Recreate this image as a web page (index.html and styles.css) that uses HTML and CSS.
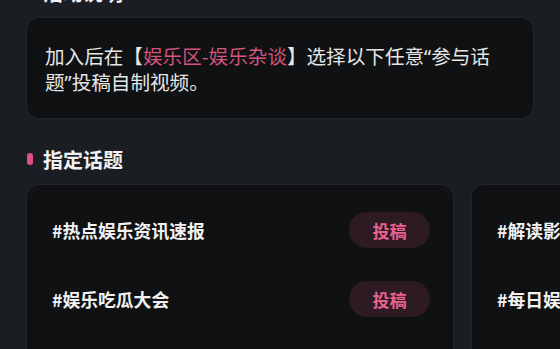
FILE: index.html
```html
<!DOCTYPE html>
<html lang="zh-CN">
<head>
<meta charset="utf-8">
<title>活动</title>
<link rel="stylesheet" href="styles.css">
</head>
<body>
<div class="page">
  <div class="section-title first"><span class="dot"></span><span>活动说明</span></div>
  <div class="info-card">
    <p class="info-text">加入后在【<span class="hl">娱乐区-娱乐杂谈</span>】选择以下任意<span class="q">“</span>参与话题<span class="q">”</span>投稿自制视频。</p>
  </div>

  <div class="section-title second"><span class="dot"></span><span>指定话题</span></div>
  <div class="topic-strip">
    <div class="topic-card">
      <div class="topic-row"><span class="topic-name">#热点娱乐资讯速报</span><span class="btn">投稿</span></div>
      <div class="topic-row"><span class="topic-name">#娱乐吃瓜大会</span><span class="btn">投稿</span></div>
    </div>
    <div class="topic-card">
      <div class="topic-row"><span class="topic-name">#解读影视热点</span><span class="btn">投稿</span></div>
      <div class="topic-row"><span class="topic-name">#每日娱乐新闻</span><span class="btn">投稿</span></div>
    </div>
  </div>
</div>
</body>
</html>
```

FILE: styles.css
```css
html, body {
  margin: 0;
  padding: 0;
  background: #1a1e23;
  overflow: hidden;
  height: 100%;
}

body {
  font-family: "Noto Sans CJK SC", "Noto Sans", sans-serif;
  color: #ececec;
}

.page {
  margin-top: -21px;
  padding: 0 27px;
}

.section-title {
  display: flex;
  align-items: center;
  gap: 10px;
  height: 26px;
  font-size: 20px;
  font-weight: 700;
  color: #f2f2f2;
}

.section-title.first {
  margin-bottom: 13px;
}

.section-title.second {
  margin-top: 28px;
  margin-bottom: 13px;
}

.dot {
  width: 6px;
  height: 12px;
  border-radius: 3px;
  background: #e2507f;
}

.info-card {
  background: #0f1113;
  border-radius: 12px;
  padding: 25px 30px 23px 18px;
  box-shadow: 0 0 0 1px rgba(255, 255, 255, 0.03);
}

.info-text {
  margin: 0;
  font-size: 19.6px;
  line-height: 26px;
  color: #e6e6e6;
}

.q {
  font-family: "Noto Sans", "DejaVu Sans", sans-serif;
  line-height: 12px;
}

.hl {
  color: #d2547f;
}

.topic-strip {
  display: flex;
  gap: 19px;
}

.topic-card {
  flex: 0 0 426px;
  height: 200px;
  background: #0f1113;
  border-radius: 12px;
  padding-top: 27px;
  box-sizing: border-box;
  display: flex;
  flex-direction: column;
  gap: 33px;
  box-shadow: 0 0 0 1px rgba(255, 255, 255, 0.03);
}

.topic-row {
  display: flex;
  align-items: center;
  justify-content: space-between;
  padding: 0 23px 0 25px;
}

.topic-name {
  font-size: 17.8px;
  font-weight: 700;
  color: #f2f2f2;
}

.btn {
  width: 81px;
  height: 36px;
  border-radius: 18px;
  background: #2d1a22;
  color: #e8628f;
  font-size: 17px;
  font-weight: 600;
  display: flex;
  align-items: center;
  justify-content: center;
}
```
